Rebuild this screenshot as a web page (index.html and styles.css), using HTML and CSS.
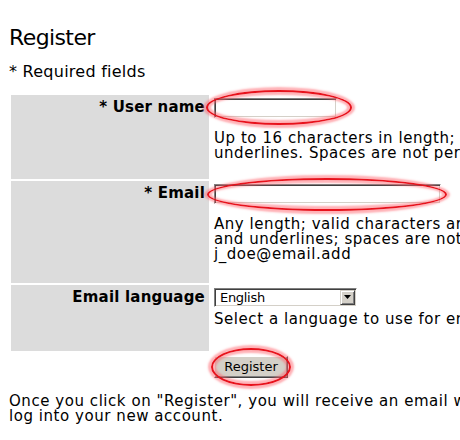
FILE: index.html
```html
<!DOCTYPE html>
<html lang="en">
<head>
<meta charset="utf-8">
<title>Register</title>
<link rel="stylesheet" href="styles.css">
</head>
<body>
<div class="page">
  <h1 class="title">Register</h1>
  <div class="required">* Required fields</div>

  <div class="form">
    <div class="label row1">* User name</div>
    <div class="field row1">
      <span class="hl hl-user"><span class="input input-user"></span></span>
      <div class="desc">Up to 16 characters in length; valid characters are letters, numbers and<br>underlines. Spaces are not permitted.</div>
    </div>

    <div class="label row2">* Email</div>
    <div class="field row2">
      <span class="hl hl-email"><span class="input input-email"></span></span>
      <div class="desc">Any length; valid characters are letters, numbers, periods, hyphens<br>and underlines; spaces are not permitted. For example:<br>j_doe@email.add</div>
    </div>

    <div class="label row3">Email language</div>
    <div class="field row3">
      <div class="select">
        <span class="select-value">English</span>
        <span class="select-btn"><svg width="7" height="4" viewBox="0 0 7 4"><path d="M0 0H7L3.5 4Z" fill="#000"/></svg></span>
      </div>
      <div class="desc desc-lang">Select a language to use for emails sent to you.</div>
    </div>
  </div>

  <div class="actions">
    <span class="hl hl-btn"><span class="button">Register</span></span>
  </div>

  <p class="note">Once you click on "Register", you will receive an email with a link that lets you<br>log into your new account.</p>
</div>
</body>
</html>
```

FILE: styles.css
```css
html, body {
  margin: 0;
  padding: 0;
  background: #fff;
  overflow: hidden;
  width: 460px;
  height: 440px;
}

.page {
  padding: 25px 0 0 9px;
  font-family: "DejaVu Sans", Verdana, sans-serif;
  color: #000;
  width: 900px;
}

.title {
  margin: 0;
  font-size: 22px;
  line-height: 26px;
  font-weight: normal;
  letter-spacing: -0.6px;
}

.required {
  margin-top: 11px;
  font-size: 16px;
  line-height: 19px;
  letter-spacing: 0.25px;
}

.form {
  display: grid;
  grid-template-columns: 198px 640px;
  grid-template-rows: 84px 102px 66px;
  gap: 2px;
  margin: 14px 0 0 2px;
}

.label {
  background: #dcdcdc;
  text-align: right;
  font-weight: bold;
  font-size: 15px;
  line-height: 16px;
  letter-spacing: 0.2px;
  padding: 4px 4px 0 0;
  white-space: nowrap;
}

.field {
  padding: 2.5px 0 0 3px;
  white-space: nowrap;
}

.desc {
  font-size: 15px;
  line-height: 15px;
  letter-spacing: 0.55px;
  margin-top: 13px;
}

.desc-lang {
  margin-top: 5.5px;
}

.hl {
  position: relative;
  display: inline-block;
  vertical-align: top;
}

.hl::after {
  content: "";
  position: absolute;
  border: 2.5px solid #e8121c;
  border-radius: 50%;
  box-shadow: 0 0 2px 3px rgba(255, 100, 110, 0.5), inset 0 0 2px 3px rgba(255, 100, 110, 0.5);
  pointer-events: none;
}

.hl-user::after {
  left: -8px;
  right: -15px;
  top: -8px;
  bottom: -7px;
}

.hl-email::after {
  left: -7px;
  right: -6px;
  top: -6px;
  bottom: -7px;
}

.hl-btn::after {
  left: -3px;
  right: -3px;
  top: -8px;
  bottom: -8px;
}

.input {
  display: block;
  box-sizing: border-box;
  height: 20px;
  background: #fff;
  border: 1px solid;
  border-color: #808080 #ffffff #ffffff #808080;
  box-shadow: inset 1px 1px 0 #404040, inset -1px -1px 0 #d4d0c8;
}

.input-user {
  width: 123px;
}

.input-email {
  width: 227px;
}

.select {
  box-sizing: border-box;
  width: 143px;
  height: 19px;
  display: flex;
  align-items: stretch;
  background: #fff;
  border: 1px solid;
  border-color: #808080 #ffffff #ffffff #808080;
  box-shadow: inset 1px 1px 0 #404040, inset -1px -1px 0 #d4d0c8;
  padding: 1px;
}

.select-value {
  flex: 1;
  font-size: 13px;
  line-height: 15px;
  letter-spacing: -0.3px;
  padding-left: 4px;
}

.select-btn {
  box-sizing: border-box;
  width: 15px;
  display: flex;
  align-items: center;
  justify-content: center;
  background: #d4d0c8;
  border: 1px solid;
  border-color: #d4d0c8 #404040 #404040 #d4d0c8;
  box-shadow: inset 1px 1px 0 #ffffff, inset -1px -1px 0 #808080;
}

.actions {
  margin: 4.5px 0 0 205px;
}

.button {
  display: flex;
  align-items: center;
  justify-content: center;
  box-sizing: border-box;
  width: 74px;
  height: 22px;
  background: #d4d0c8;
  border: 1px solid;
  border-color: #ffffff #404040 #404040 #ffffff;
  box-shadow: inset -1px -1px 0 #808080;
  font-size: 13px;
  line-height: 15px;
}

.note {
  margin: 16.5px 0 0;
  font-size: 15px;
  line-height: 15px;
  letter-spacing: 0.55px;
  white-space: nowrap;
}
```
